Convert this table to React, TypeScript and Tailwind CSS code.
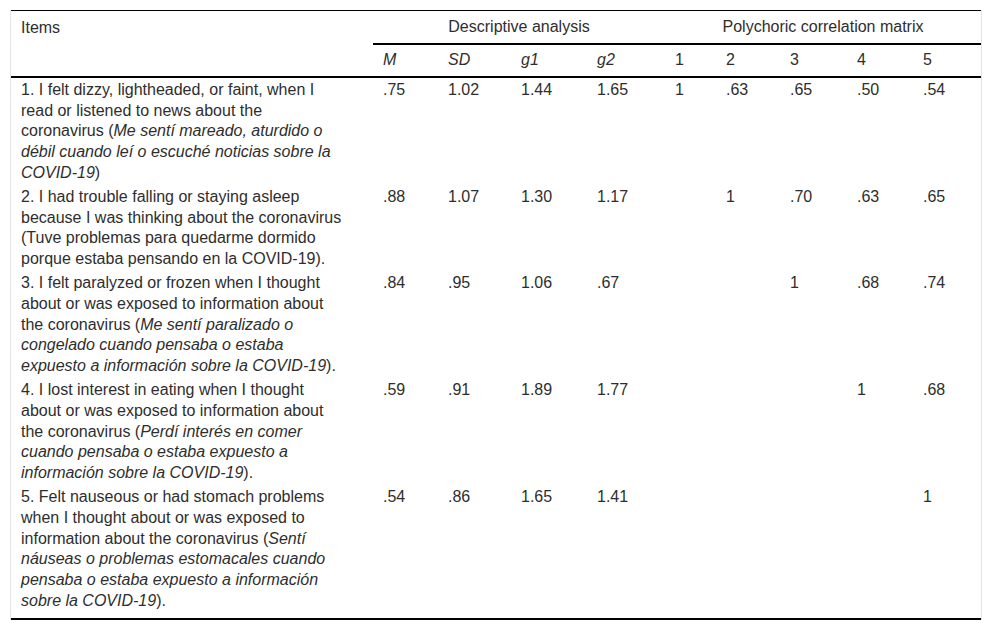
import React from "react"

type Row = {
  item: React.ReactNode
  stats: string[]
  corr: string[]
}

const rows: Row[] = [
  {
    item: (
      <>
        1. I felt dizzy, lightheaded, or faint, when I read or listened to news about the coronavirus (
        <i>Me sentí mareado, aturdido o débil cuando leí o escuché noticias sobre la COVID-19</i>)
      </>
    ),
    stats: [".75", "1.02", "1.44", "1.65"],
    corr: ["1", ".63", ".65", ".50", ".54"],
  },
  {
    item: (
      <>
        2. I had trouble falling or staying asleep because I was thinking about the coronavirus (Tuve problemas
        para quedarme dormido porque estaba pensando en la COVID-19).
      </>
    ),
    stats: [".88", "1.07", "1.30", "1.17"],
    corr: ["", "1", ".70", ".63", ".65"],
  },
  {
    item: (
      <>
        3. I felt paralyzed or frozen when I thought about or was exposed to information about the coronavirus (
        <i>Me sentí paralizado o congelado cuando pensaba o estaba expuesto a información sobre la COVID-19</i>).
      </>
    ),
    stats: [".84", ".95", "1.06", ".67"],
    corr: ["", "", "1", ".68", ".74"],
  },
  {
    item: (
      <>
        4. I lost interest in eating when I thought about or was exposed to information about the coronavirus (
        <i>Perdí interés en comer cuando pensaba o estaba expuesto a información sobre la COVID-19</i>).
      </>
    ),
    stats: [".59", ".91", "1.89", "1.77"],
    corr: ["", "", "", "1", ".68"],
  },
  {
    item: (
      <>
        5. Felt nauseous or had stomach problems when I thought about or was exposed to information about the
        coronavirus (
        <i>Sentí náuseas o problemas estomacales cuando pensaba o estaba expuesto a información sobre la COVID-19</i>
        ).
      </>
    ),
    stats: [".54", ".86", "1.65", "1.41"],
    corr: ["", "", "", "", "1"],
  },
]

export default function App() {
  return (
    <div className="min-h-screen bg-white pt-[10px] px-[10px] font-[family-name:Liberation_Sans,Arial,sans-serif]">
      <div className="w-[972px] border-x border-[#e4e4e4]">
        <table className="w-full table-fixed border-separate border-spacing-0 border-t border-black text-[16px] leading-[20.8px] text-[#2e2e2e]">
          <colgroup>
            <col className="w-[362px]" />
            <col className="w-[65px]" />
            <col className="w-[73px]" />
            <col className="w-[76px]" />
            <col className="w-[78px]" />
            <col className="w-[51px]" />
            <col className="w-[64px]" />
            <col className="w-[67px]" />
            <col className="w-[66px]" />
            <col className="w-[68px]" />
          </colgroup>
          <thead>
            {/* Group headers */}
            <tr>
              <th className="px-[10px] py-[6px] text-left font-normal align-middle">Items</th>
              <th colSpan={4} className="py-[5.6px] text-center font-normal border-b-2 border-black">
                Descriptive analysis
              </th>
              <th colSpan={5} className="py-[5.6px] text-center font-normal border-b-2 border-black">
                Polychoric correlation matrix
              </th>
            </tr>
            {/* Column labels */}
            <tr>
              <th className="py-[5px] border-b-2 border-black" />
              {["M", "SD", "g1", "g2"].map((h) => (
                <th key={h} className="px-[10px] py-[5px] text-left font-normal italic border-b-2 border-black">
                  {h}
                </th>
              ))}
              {["1", "2", "3", "4", "5"].map((h) => (
                <th key={h} className="px-[10px] py-[5px] text-left font-normal border-b-2 border-black">
                  {h}
                </th>
              ))}
            </tr>
          </thead>
          <tbody>
            {rows.map((r, i) => {
              const last = i === rows.length - 1
              const cell = last
                ? "px-[10px] pt-[2px] pb-[6px] align-top text-left border-b-2 border-black"
                : "px-[10px] pt-[2px] pb-[1px] align-top text-left"
              return (
                <tr key={i}>
                  <td className={cell + " pr-[29px]"}>{r.item}</td>
                  {r.stats.map((s, j) => (
                    <td key={"s" + j} className={cell}>
                      {s}
                    </td>
                  ))}
                  {r.corr.map((c, j) => (
                    <td key={"c" + j} className={cell}>
                      {c}
                    </td>
                  ))}
                </tr>
              )
            })}
          </tbody>
        </table>
      </div>
    </div>
  )
}
